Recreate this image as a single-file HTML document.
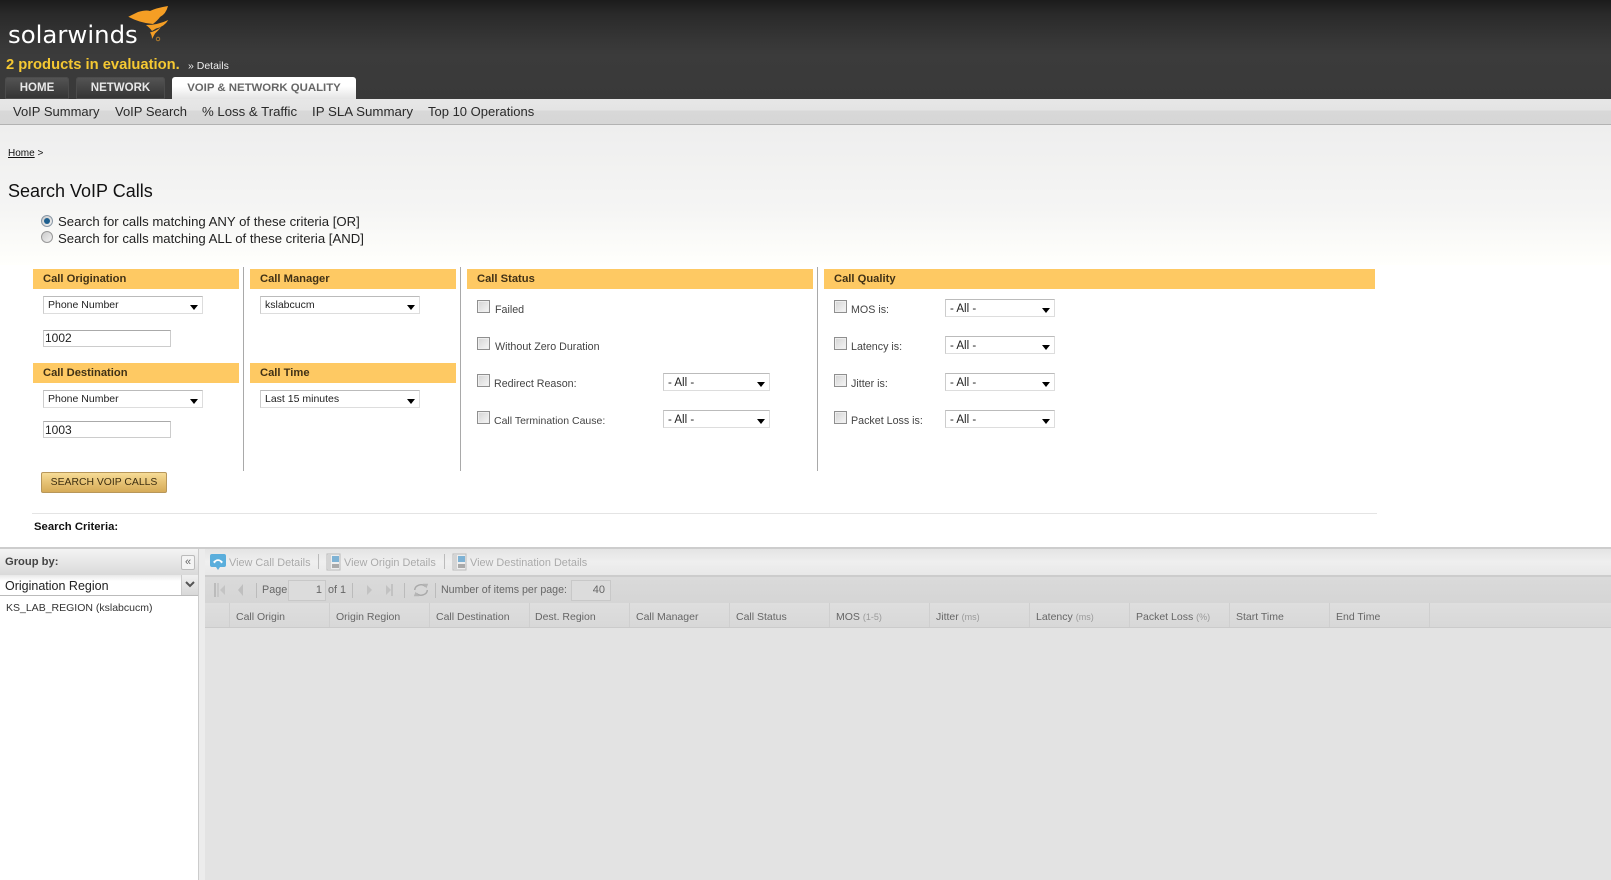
<!DOCTYPE html>
<html><head><meta charset="utf-8"><style>
html,body{margin:0;padding:0;width:1611px;height:880px;overflow:hidden;background:#fff}
body{position:relative;font-family:"Liberation Sans",sans-serif;color:#222}
div,span.a{position:absolute}
.t{position:absolute;white-space:nowrap;line-height:16px;height:16px}
.bar{position:absolute;height:20px;background:#fec963}
.h{position:absolute;white-space:nowrap;font-weight:bold;font-size:11.2px;line-height:20px;color:#403116}
.v{position:absolute;width:1px;top:267px;height:204px;background:#a9a9a9}
.s{position:absolute;height:16px;background:#fff;border:1px solid #ddd;border-top-color:#bbb;border-left-color:#ccc;font-size:10.5px;line-height:17px;color:#222;box-sizing:content-box;white-space:nowrap;text-indent:4px}
.s:after{content:"";position:absolute;right:4px;top:8px;border:4px solid transparent;border-top:5px solid #000;border-bottom:0}
.s.al{font-size:11.5px;line-height:19px}
.i{position:absolute;height:15px;width:126px;background:#fff;border:1px solid #ccc;border-top-color:#aaa;font-size:12px;line-height:15px;text-indent:1px;color:#222}
.c{position:absolute;width:11px;height:11px;border:1px solid #8f8f8f;background:linear-gradient(135deg,#d4d4d4,#f6f6f6);box-shadow:inset 0 0 0 1px #eee}
.l{position:absolute;white-space:nowrap;font-size:10.7px;line-height:16px;color:#444}
.g{position:absolute;white-space:nowrap;font-size:10.9px;line-height:16px;color:#aaa}
.p{position:absolute;white-space:nowrap;font-size:10.8px;line-height:16px;color:#666}
.sep{position:absolute;width:1px;background:#bbb}
.col{position:absolute;top:603px;height:24px;width:1px;background:#cfcfcf}
.ch{position:absolute;top:609px;white-space:nowrap;font-size:10.5px;line-height:16px;color:#666}
.ch small{font-size:9px;color:#999}
.n{position:absolute;top:104px;height:16px;line-height:16px;white-space:nowrap;color:#2a2a2a;font-size:13px}
</style></head><body>

<!-- header -->
<div style="left:0;top:0;width:1611px;height:99px;background:linear-gradient(#1b1b1b 0,#2a2a2a 15px,#353535 38px,#3b3b3b 55px,#393939 99px)"></div>
<div class="t" style="left:8px;top:19px;height:32px;line-height:32px;font-size:24.4px;color:#fff;font-family:'DejaVu Sans',sans-serif">solarwinds</div>
<svg style="position:absolute;left:125px;top:2px" width="50" height="46" viewBox="125 2 50 46">
<path fill="#f59e24" d="M128.3 16.7L138 12Q146 9.5 150 11Q156 8 168 6Q166 14 160 17Q158 20 153 24Q140 23 128.3 16.7Z"/>
<path fill="#f59e24" d="M146 25Q158 25 168.3 20Q164 27 156 28.5L152 31Q150 28 146 25Z"/>
<path fill="#f59e24" d="M150 32.5Q156 31 161 27Q158 31 155 33.5L152 39Q152 35 150 32.5Z"/>
<circle cx="158" cy="39" r="1.8" fill="none" stroke="#c98a2a" stroke-width=".8"/>
</svg>
<div class="t" style="left:6px;top:57px;font-size:14.75px;font-weight:bold;color:#f5c832">2 products in evaluation.</div>
<div class="t" style="left:188px;top:58px;font-size:10.5px;color:#eee">» Details</div>

<!-- tabs -->
<div style="left:5px;top:77px;width:64px;height:22px;background:linear-gradient(#555,#333);border-radius:3px 3px 0 0;box-shadow:inset 0 0 0 1px #4c4c4c;color:#e8e8e8;font-weight:bold;font-size:11.5px;line-height:22px;text-align:center">HOME</div>
<div style="left:76px;top:77px;width:89px;height:22px;background:linear-gradient(#555,#333);border-radius:3px 3px 0 0;box-shadow:inset 0 0 0 1px #4c4c4c;color:#e8e8e8;font-weight:bold;font-size:11.5px;line-height:22px;text-align:center">NETWORK</div>
<div style="left:172px;top:77px;width:184px;height:22px;background:linear-gradient(#fff 40%,#e4e4e4);border-radius:3px 3px 0 0;color:#666;font-weight:bold;font-size:11.4px;line-height:22px;text-align:center">VOIP &amp; NETWORK QUALITY</div>

<!-- nav -->
<div style="left:0;top:99px;width:1611px;height:25px;background:linear-gradient(#e7e7e7 0,#e4e4e4 11px,#d8d8d8 12px,#d6d6d6 100%)"></div>
<div style="left:0;top:124px;width:1611px;height:1px;background:#b2b2b2"></div>
<div class="n" style="left:13px">VoIP Summary</div>
<div class="n" style="left:115px">VoIP Search</div>
<div class="n" style="left:202px;font-size:13.2px">% Loss &amp; Traffic</div>
<div class="n" style="left:312px;font-size:13.3px">IP SLA Summary</div>
<div class="n" style="left:428px">Top 10 Operations</div>

<!-- content bg -->
<div style="left:0;top:125px;width:1611px;height:140px;background:linear-gradient(#eeeeee,#f5f5f4 60%,#fffffc)"></div>
<div class="t" style="left:8px;top:146px;font-size:10px;color:#111"><u>Home</u> &gt;</div>
<div class="t" style="left:8px;top:180px;height:22px;line-height:22px;font-size:18px;color:#111">Search VoIP Calls</div>

<!-- radios -->
<svg style="position:absolute;left:40px;top:214px" width="14" height="30" viewBox="0 0 14 30">
<defs><linearGradient id="r" x1="0" y1="0" x2="1" y2="1"><stop offset="0" stop-color="#c8c8c8"/><stop offset="1" stop-color="#f4f4f4"/></linearGradient></defs>
<circle cx="7" cy="7" r="5.5" fill="url(#r)" stroke="#8a98a6"/><circle cx="7" cy="7" r="3" fill="#1d5f8f"/>
<circle cx="7" cy="23" r="5.5" fill="url(#r)" stroke="#999"/>
</svg>
<div class="t" style="left:58px;top:214px;font-size:13.17px;color:#222">Search for calls matching ANY of these criteria [OR]</div>
<div class="t" style="left:58px;top:231px;font-size:13.17px;color:#222">Search for calls matching ALL of these criteria [AND]</div>

<!-- bars -->
<div class="bar" style="left:33px;top:269px;width:206px"></div><div class="h" style="left:43px;top:269px">Call Origination</div>
<div class="bar" style="left:250px;top:269px;width:206px"></div><div class="h" style="left:260px;top:269px">Call Manager</div>
<div class="bar" style="left:467px;top:269px;width:346px"></div><div class="h" style="left:477px;top:269px">Call Status</div>
<div class="bar" style="left:824px;top:269px;width:551px"></div><div class="h" style="left:834px;top:269px">Call Quality</div>
<div class="bar" style="left:33px;top:363px;width:206px"></div><div class="h" style="left:43px;top:363px">Call Destination</div>
<div class="bar" style="left:250px;top:363px;width:206px"></div><div class="h" style="left:260px;top:363px">Call Time</div>

<div class="v" style="left:243px"></div>
<div class="v" style="left:460px"></div>
<div class="v" style="left:817px"></div>

<!-- origin/dest -->
<div class="s" style="left:43px;top:296px;width:158px">Phone Number</div>
<div class="i" style="left:43px;top:330px">1002</div>
<div class="s" style="left:43px;top:390px;width:158px">Phone Number</div>
<div class="i" style="left:43px;top:421px;line-height:17px">1003</div>
<div class="s" style="left:260px;top:296px;width:158px">kslabcucm</div>
<div class="s" style="left:260px;top:390px;width:158px">Last 15 minutes</div>

<!-- button -->
<div style="left:41px;top:472px;width:124px;height:19px;border:1px solid #b8975a;border-radius:2px;background:linear-gradient(#f6dc98,#e8c477 45%,#d6ab58);color:#3d2e10;font-size:10.4px;line-height:19px;text-align:center">SEARCH VOIP CALLS</div>

<div style="left:32px;top:513px;width:1345px;height:1px;background:#e4e4e4"></div>
<div class="t" style="left:34px;top:519px;font-size:11.3px;font-weight:bold;color:#111">Search Criteria:</div>

<!-- status -->
<div class="c" style="left:477px;top:300px"></div><div class="l" style="left:495px;top:302px">Failed</div>
<div class="c" style="left:477px;top:337px"></div><div class="l" style="left:495px;top:339px">Without Zero Duration</div>
<div class="c" style="left:477px;top:374px"></div><div class="l" style="left:494px;top:376px">Redirect Reason:</div>
<div class="c" style="left:477px;top:411px"></div><div class="l" style="left:494px;top:413px;font-size:10.5px">Call Termination Cause:</div>
<div class="s al" style="left:663px;top:373px;width:105px">- All -</div>
<div class="s al" style="left:663px;top:410px;width:105px">- All -</div>

<!-- quality -->
<div class="c" style="left:834px;top:300px"></div><div class="l" style="left:851px;top:302px">MOS is:</div>
<div class="c" style="left:834px;top:337px"></div><div class="l" style="left:851px;top:339px">Latency is:</div>
<div class="c" style="left:834px;top:374px"></div><div class="l" style="left:851px;top:376px">Jitter is:</div>
<div class="c" style="left:834px;top:411px"></div><div class="l" style="left:851px;top:413px">Packet Loss is:</div>
<div class="s al" style="left:945px;top:299px;width:108px">- All -</div>
<div class="s al" style="left:945px;top:336px;width:108px">- All -</div>
<div class="s al" style="left:945px;top:373px;width:108px">- All -</div>
<div class="s al" style="left:945px;top:410px;width:108px">- All -</div>

<!-- bottom panels -->
<div style="left:0;top:547px;width:1611px;height:2px;background:#cdcdcd"></div>
<div style="left:0;top:549px;width:198px;height:331px;background:#fff"></div>
<div style="left:198px;top:549px;width:7px;height:331px;background:#ececec;border-left:1px solid #ccc;box-sizing:border-box"></div>
<div style="left:0;top:549px;width:198px;height:26px;background:linear-gradient(#f4f4f4,#dadada)"></div>
<div class="t" style="left:5px;top:554px;font-size:11.2px;font-weight:bold;color:#444">Group by:</div>
<div style="left:181px;top:555px;width:12px;height:13px;border:1px solid #bbb;border-radius:2px;background:#f4f4f4;color:#666;font-size:11px;line-height:12px;text-align:center">«</div>
<div style="left:0;top:575px;width:198px;height:20px;background:linear-gradient(#e8e8e8,#fff 30%);border-bottom:1px solid #bbb"></div>
<div class="t" style="left:5px;top:578px;font-size:12.5px;color:#222">Origination Region</div>
<div style="left:181px;top:575px;width:17px;height:20px;background:linear-gradient(#f0f0f0,#d8d8d8);border-left:1px solid #ccc;box-sizing:border-box"></div>
<svg style="position:absolute;left:185px;top:581px" width="10" height="7"><path d="M1 1L5 5L9 1" fill="none" stroke="#555" stroke-width="2"/></svg>
<div class="t" style="left:6px;top:600px;font-size:10.5px;color:#333">KS_LAB_REGION (kslabcucm)</div>

<!-- main -->
<div style="left:205px;top:549px;width:1406px;height:331px;background:#e3e3e3"></div>
<div style="left:205px;top:549px;width:1406px;height:26px;background:linear-gradient(#e4e4e4,#efefef 50%,#e8e8e8)"></div>
<div style="left:205px;top:575px;width:1406px;height:2px;background:#cccccc"></div>
<div style="left:205px;top:577px;width:1406px;height:26px;background:linear-gradient(#dadada,#d5d5d5)"></div>
<div style="left:205px;top:603px;width:1406px;height:24px;background:linear-gradient(#dedede,#d8d8d8)"></div>
<div style="left:205px;top:627px;width:1406px;height:1px;background:#cbcbcb"></div>

<!-- toolbar -->
<svg style="position:absolute;left:209px;top:553px" width="18" height="18" viewBox="0 0 18 18"><rect x="1" y="1" width="16" height="13" rx="2" fill="#5aaedc"/><path d="M7 14L9 17L11 14Z" fill="#5aaedc"/><path d="M4 9Q9 3.5 14 9L12 10.5Q11.5 8 9 8Q6.5 8 6 10.5Z" fill="#fff"/></svg>
<div class="g" style="left:229px;top:555px">View Call Details</div>
<div class="sep" style="left:318px;top:554px;height:15px"></div>
<svg style="position:absolute;left:325px;top:553px" width="17" height="18" viewBox="0 0 17 18"><path d="M2 1H15V17H2Z" fill="#eee" stroke="#bbb"/><rect x="7" y="3" width="7" height="6" fill="#7eb2d4"/><path d="M7 11H14V15H7Z" fill="#aaa"/><path d="M3 2H6V16H3Z" fill="#d4d4d4"/></svg>
<div class="g" style="left:344px;top:555px">View Origin Details</div>
<div class="sep" style="left:444px;top:554px;height:15px"></div>
<svg style="position:absolute;left:451px;top:553px" width="17" height="18" viewBox="0 0 17 18"><path d="M2 1H15V17H2Z" fill="#eee" stroke="#bbb"/><rect x="7" y="3" width="7" height="6" fill="#7eb2d4"/><path d="M7 11H14V15H7Z" fill="#aaa"/><path d="M3 2H6V16H3Z" fill="#d4d4d4"/></svg>
<div class="g" style="left:470px;top:555px">View Destination Details</div>

<!-- pager -->
<svg style="position:absolute;left:210px;top:580px" width="40" height="20" viewBox="0 0 40 20"><path d="M4 3H6V17H4Z" fill="#bbb"/><path d="M7 3H9V17H7Z" fill="#c8c8c8"/><path d="M15 5L10 10L15 15Z" fill="#c4c4c4"/><path d="M33 4L28 10L33 16Z" fill="#bfbfbf"/></svg>
<div class="sep" style="left:256px;top:583px;height:15px"></div>
<div class="p" style="left:262px;top:582px">Page</div>
<div style="left:288px;top:580px;width:36px;height:19px;border:1px solid #c8c8c8;background:#dcdcdc;font-size:11px;line-height:19px;color:#666;text-align:right"><span style="padding-right:3px">1</span></div>
<div class="p" style="left:328px;top:582px">of 1</div>
<div class="sep" style="left:352px;top:583px;height:15px"></div>
<svg style="position:absolute;left:362px;top:580px" width="34" height="20" viewBox="0 0 34 20"><path d="M5 5L10 10L5 15Z" fill="#c2c2c2"/><path d="M24 5L29 10L24 15Z" fill="#c2c2c2"/><path d="M29 4H31V16H29Z" fill="#c2c2c2"/></svg>
<div class="sep" style="left:404px;top:583px;height:15px"></div>
<svg style="position:absolute;left:412px;top:581px" width="18" height="18" viewBox="0 0 20 20"><path d="M3 10A7 6 0 0 1 15 6" fill="none" stroke="#a9a9a9" stroke-width="1.6"/><path d="M17 10A7 6 0 0 1 5 14" fill="none" stroke="#a9a9a9" stroke-width="1.6"/><path d="M12 3L18 3L16 8Z" fill="#b5b5b5"/><path d="M2 17L8 17L4 12Z" fill="#b5b5b5"/></svg>
<div class="sep" style="left:435px;top:583px;height:15px"></div>
<div class="p" style="left:441px;top:582px;font-size:10.65px">Number of items per page:</div>
<div style="left:571px;top:580px;width:38px;height:19px;border:1px solid #c8c8c8;background:#dcdcdc;font-size:11px;line-height:19px;color:#666;text-align:right"><span style="padding-right:5px">40</span></div>

<!-- columns -->
<div class="col" style="left:229px"></div><div class="ch" style="left:236px">Call Origin</div>
<div class="col" style="left:329px"></div><div class="ch" style="left:336px">Origin Region</div>
<div class="col" style="left:429px"></div><div class="ch" style="left:436px">Call Destination</div>
<div class="col" style="left:529px"></div><div class="ch" style="left:535px">Dest. Region</div>
<div class="col" style="left:629px"></div><div class="ch" style="left:636px">Call Manager</div>
<div class="col" style="left:729px"></div><div class="ch" style="left:736px">Call Status</div>
<div class="col" style="left:829px"></div><div class="ch" style="left:836px">MOS <small>(1-5)</small></div>
<div class="col" style="left:929px"></div><div class="ch" style="left:936px">Jitter <small>(ms)</small></div>
<div class="col" style="left:1029px"></div><div class="ch" style="left:1036px">Latency <small>(ms)</small></div>
<div class="col" style="left:1129px"></div><div class="ch" style="left:1136px">Packet Loss <small>(%)</small></div>
<div class="col" style="left:1229px"></div><div class="ch" style="left:1236px">Start Time</div>
<div class="col" style="left:1329px"></div><div class="ch" style="left:1336px">End Time</div>
<div class="col" style="left:1429px"></div>
</body></html>
